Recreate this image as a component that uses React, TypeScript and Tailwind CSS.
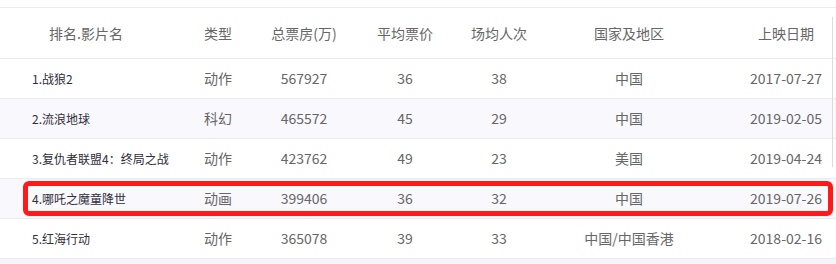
const rows = [
  { name: "1.战狼2", type: "动作", box: "567927", price: "36", people: "38", region: "中国", date: "2017-07-27" },
  { name: "2.流浪地球", type: "科幻", box: "465572", price: "45", people: "29", region: "中国", date: "2019-02-05" },
  { name: "3.复仇者联盟4：终局之战", type: "动作", box: "423762", price: "49", people: "23", region: "美国", date: "2019-04-24" },
  { name: "4.哪吒之魔童降世", type: "动画", box: "399406", price: "36", people: "32", region: "中国", date: "2019-07-26" },
  { name: "5.红海行动", type: "动作", box: "365078", price: "39", people: "33", region: "中国/中国香港", date: "2018-02-16" },
];

const cols = "grid grid-cols-[172px_92px_80px_122px_66px_194px_106px]";

export default function App() {
  return (
    <div
      className="relative w-[836px] h-[264px] overflow-hidden bg-[#f5f5f7] text-[14px]"
      style={{ fontFamily: '"Noto Sans CJK SC", "Noto Sans", sans-serif' }}
    >
      <div className="bg-white pt-[7px]">
        <div className="border-t border-[#ebeaf4]">
          {/* Header */}
          <div className={`${cols} h-[51px] items-center border-b border-[#ebeaf4] text-[#666]`}>
            <div className="text-center">排名.影片名</div>
            <div className="text-center">类型</div>
            <div className="text-center">总票房(万)</div>
            <div className="text-center">平均票价</div>
            <div className="text-center">场均人次</div>
            <div className="text-center">国家及地区</div>
            <div className="text-center pl-[14px] whitespace-nowrap">上映日期</div>
          </div>

          {/* Rows */}
          {rows.map((r, i) => (
            <div
              key={r.name}
              className={`${cols} relative h-[40px] items-center border-b border-[#ebeaf4] text-[#666] ${
                i % 2 === 1 ? "bg-[#f9f8fd]" : "bg-white"
              }`}
            >
              <div className="pl-[32px] text-[12px] text-[#2f2d3a] whitespace-nowrap">{r.name}</div>
              <div className="text-center">{r.type}</div>
              <div className="text-center">{r.box}</div>
              <div className="text-center">{r.price}</div>
              <div className="text-center">{r.people}</div>
              <div className="text-center whitespace-nowrap">{r.region}</div>
              <div className="text-center pl-[14px] whitespace-nowrap">{r.date}</div>
              {i === 3 && (
                <div className="absolute left-[23px] right-[3px] top-[2px] bottom-[2px] rounded-[6px] border-[5px] border-[#ff1a1a] pointer-events-none" />
              )}
            </div>
          ))}
        </div>
      </div>

      {/* scrollbar track edge */}
      <div className="absolute right-[3px] top-[17px] h-[150px] w-px bg-[#dcdcdc]" />
    </div>
  );
}
